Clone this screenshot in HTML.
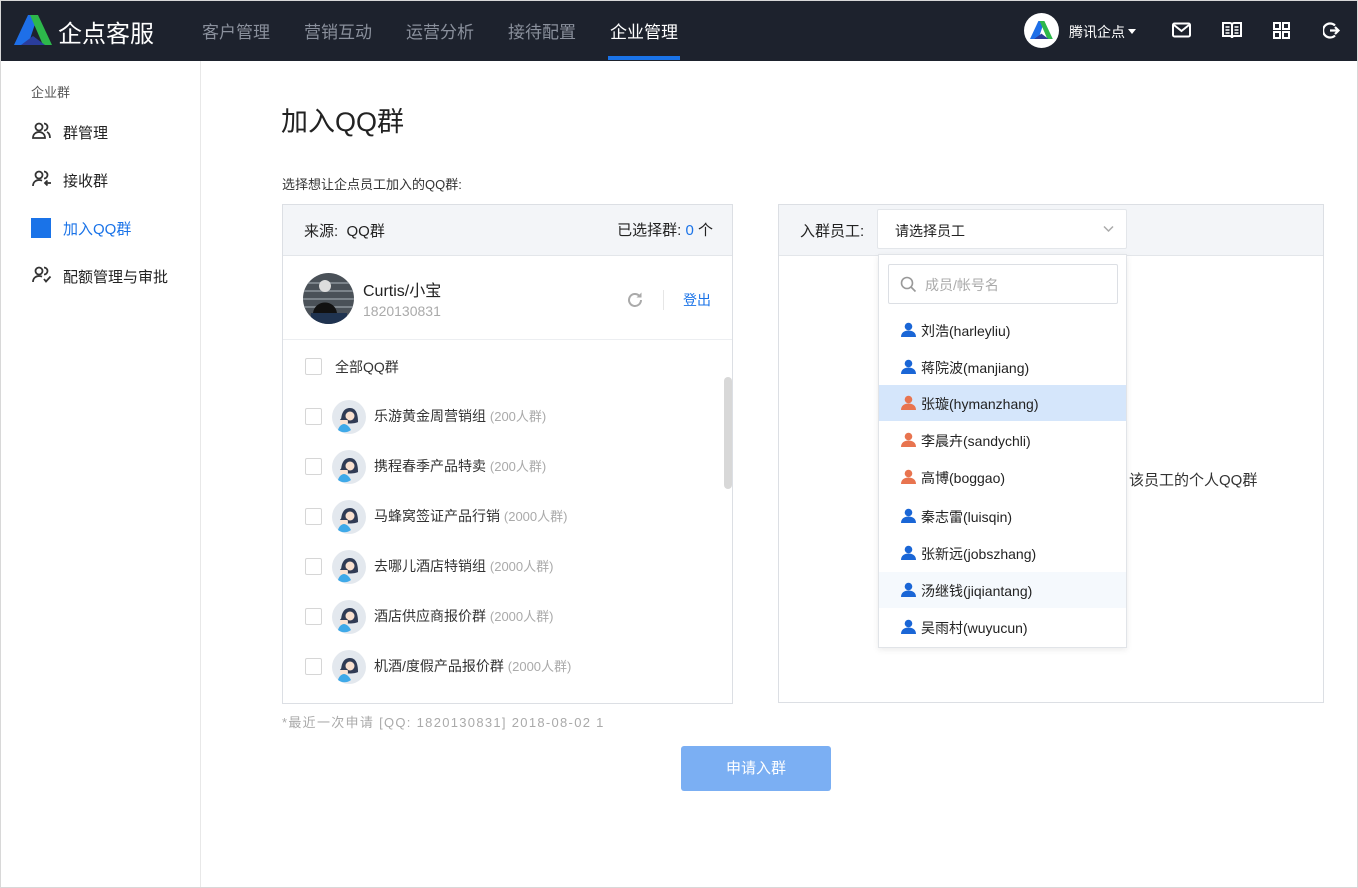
<!DOCTYPE html>
<html><head><meta charset="utf-8"><style>
*{box-sizing:border-box;margin:0;padding:0}
body{width:1358px;height:888px;overflow:hidden;background:#fff;font-family:"Liberation Sans","Noto Sans CJK SC",sans-serif;color:#222;position:relative}
.frame{position:absolute;left:0;top:0;width:1358px;height:888px;border:1px solid #d8d8d8;pointer-events:none}
.nav{position:absolute;left:0;top:0;width:1358px;height:61px;background:#1d222d}
.nav .it{position:absolute;top:18px;font-size:17px;color:#8a909c}
.nav .act{color:#fff}
.abs{position:absolute}
.side{position:absolute;left:0;top:61px;width:201px;height:827px;border-right:1px solid #e8e8e8}
.sitem{position:absolute;left:63px;font-size:15px;color:#222}
.panel{position:absolute;border:1px solid #dcdfe4;background:#fff}
.ph{position:absolute;left:0;top:0;right:0;height:51px;background:#f3f5f8;border-bottom:1px solid #e3e6ea}
.cb{position:absolute;left:22px;width:17px;height:17px;border:1px solid #d6d6d6;border-radius:2px;background:#fff}
.row{position:absolute;left:0;height:50px;width:440px}
.row .av{position:absolute;left:49px;top:8px;width:34px;height:34px}
.row .t{position:absolute;left:91px;top:14px;font-size:14px;color:#333}
.row .t span{color:#aaa;font-size:13px}
.dd{position:absolute;left:878px;top:254px;width:249px;height:394px;background:#fff;border:1px solid #e1e4e8;box-shadow:0 2px 6px rgba(0,0,0,.08)}
.di{position:absolute;left:0;width:247px;height:36px;font-size:14px;color:#222}
.di svg{position:absolute;left:22px;top:10px}
.di span{position:absolute;left:42px;top:9px}
</style></head><body>
<div class="nav">
 <svg class="abs" style="left:14px;top:15px" width="40" height="30" viewBox="0 0 40 30"><path d="M14 0h10l-10 30H0z" fill="#1e6fe8"/><path d="M16 0h8l14 30h-9z" fill="#2db84b"/><path d="M7 30l12-9 12 9z" fill="#2a3d9c"/></svg>
 <div class="abs" style="left:58px;top:14px;font-size:24px;color:#fff">企点客服</div>
 <div class="it" style="left:202px">客户管理</div>
 <div class="it" style="left:304px">营销互动</div>
 <div class="it" style="left:406px">运营分析</div>
 <div class="it" style="left:508px">接待配置</div>
 <div class="it act" style="left:610px">企业管理</div>
 <div class="abs" style="left:608px;top:56px;width:72px;height:4px;background:#1a73e8"></div>
 <div class="abs" style="left:1024px;top:13px;width:35px;height:35px;border-radius:50%;background:#fff"></div>
 <svg class="abs" style="left:1030px;top:20px" width="24" height="20" viewBox="0 0 40 30"><path d="M14 0h10l-10 30H0z" fill="#1e6fe8"/><path d="M16 0h8l14 30h-9z" fill="#2db84b"/><path d="M7 30l12-9 12 9z" fill="#2a3d9c"/></svg>
 <div class="abs" style="left:1069px;top:22px;font-size:14px;color:#fff">腾讯企点</div>
 <div class="abs" style="left:1128px;top:29px;border:4px solid transparent;border-top:5px solid #fff"></div>
 <svg class="abs" style="left:1172px;top:22px" width="19" height="16" viewBox="0 0 19 16"><rect x="1" y="1.5" width="17" height="13" rx="1.5" fill="none" stroke="#fff" stroke-width="2"/><path d="M2 3l7.5 6L17 3" fill="none" stroke="#fff" stroke-width="2"/></svg>
 <svg class="abs" style="left:1222px;top:21px" width="20" height="18" viewBox="0 0 20 18"><path d="M1 2h7a2 2 0 012 2v13a2 2 0 00-2-2H1zM19 2h-7a2 2 0 00-2 2v13a2 2 0 012-2h7z" fill="none" stroke="#fff" stroke-width="2"/><path d="M3.5 6h4M3.5 9h4M3.5 12h4M12.5 6h4M12.5 9h4M12.5 12h4" stroke="#fff" stroke-width="1.5"/></svg>
 <svg class="abs" style="left:1273px;top:22px" width="17" height="17" viewBox="0 0 17 17"><g fill="none" stroke="#fff" stroke-width="2"><rect x="1" y="1" width="6" height="6"/><rect x="10" y="1" width="6" height="6"/><rect x="1" y="10" width="6" height="6"/><rect x="10" y="10" width="6" height="6"/></g></svg>
 <svg class="abs" style="left:1323px;top:22px" width="18" height="17" viewBox="0 0 18 17"><path d="M12 3.5A7 7 0 1 0 12 13.5" fill="none" stroke="#fff" stroke-width="2.2"/><path d="M7 8.5h8M12 5l3.5 3.5L12 12" fill="none" stroke="#fff" stroke-width="2.2"/></svg>
</div>
<div class="side">
 <div class="abs" style="left:31px;top:21px;font-size:13px;color:#555">企业群</div>
 <svg class="abs" style="left:32px;top:61px" width="19" height="17" viewBox="0 0 19 17"><g fill="none" stroke="#333" stroke-width="1.8"><circle cx="7" cy="5" r="3.5"/><path d="M1 16c0-4 3-6 6-6s6 2 6 6z"/><path d="M12 1.5a3.5 3.5 0 010 7M15 10c2 1 3 3 3 6"/></g></svg>
 <div class="sitem" style="top:61px">群管理</div>
 <svg class="abs" style="left:32px;top:109px" width="20" height="17" viewBox="0 0 20 17"><g fill="none" stroke="#333" stroke-width="1.8"><circle cx="7" cy="5" r="3.5"/><path d="M1 16c0-4 3-6 6-6 1 0 2 .2 3 .7"/><path d="M12 1.5a3.5 3.5 0 010 7M19 13h-6M15.5 10.5L13 13l2.5 2.5"/></g></svg>
 <div class="sitem" style="top:109px">接收群</div>
 <div class="abs" style="left:31px;top:157px;width:20px;height:20px;background:#1a73e8"></div>
 <div class="sitem" style="top:157px;color:#1a73e8">加入QQ群</div>
 <svg class="abs" style="left:32px;top:205px" width="20" height="17" viewBox="0 0 20 17"><g fill="none" stroke="#333" stroke-width="1.8"><circle cx="7" cy="5" r="3.5"/><path d="M1 16c0-4 3-6 6-6 1 0 2 .2 3 .7"/><path d="M12 1.5a3.5 3.5 0 010 7M12 13l2 2.5 4.5-5"/></g></svg>
 <div class="sitem" style="top:205px">配额管理与审批</div>
</div>
<div class="abs" style="left:281px;top:100px;font-size:27px;color:#222">加入QQ群</div>
<div class="abs" style="left:282px;top:174px;font-size:13px;color:#333">选择想让企点员工加入的QQ群:</div>

<div class="panel" style="left:282px;top:204px;width:451px;height:500px">
 <div class="ph"><div class="abs" style="left:21px;top:15px;font-size:15px">来源:&nbsp; QQ群</div>
 <div class="abs" style="right:19px;top:14px;font-size:15px">已选择群: <span style="color:#1a73e8">0</span> 个</div></div>
 <div class="abs" style="left:0;top:134px;width:449px;border-top:1px solid #eceef1"></div>
 <svg class="abs" style="left:20px;top:68px" width="51" height="51" viewBox="0 0 51 51"><defs><clipPath id="c"><circle cx="25.5" cy="25.5" r="25.5"/></clipPath></defs><g clip-path="url(#c)"><rect width="51" height="51" fill="#4a5158"/><g stroke="#7b838a" stroke-width="2"><path d="M0 10h51M0 18h51M0 26h51M0 34h51"/></g><circle cx="22" cy="13" r="6" fill="#ddd"/><path d="M10 40c2-14 22-14 24 0z" fill="#111"/><rect x="8" y="40" width="36" height="11" fill="#1f3350"/></g></svg>
 <div class="abs" style="left:80px;top:72px;font-size:16px;color:#222">Curtis/小宝</div>
 <div class="abs" style="left:80px;top:98px;font-size:14px;color:#aaa">1820130831</div>
 <svg class="abs" style="left:343px;top:86px" width="18" height="18" viewBox="0 0 18 18"><path d="M15 9a6 6 0 1 1-1.8-4.3" fill="none" stroke="#aaa" stroke-width="2"/><path d="M15.5 1.5v5h-5z" fill="#aaa"/></svg>
 <div class="abs" style="left:380px;top:85px;width:1px;height:20px;background:#e6e6e6"></div>
 <div class="abs" style="left:400px;top:85px;font-size:14px;color:#1a73e8">登出</div>
 <div class="cb" style="top:153px"></div>
 <div class="abs" style="left:52px;top:152px;font-size:14px;color:#333">全部QQ群</div>
 <div class="abs" style="left:441px;top:172px;width:8px;height:112px;background:#d8d8d8;border-radius:4px"></div>
 <div id="rows"></div>
</div>
<div class="abs" style="left:282px;top:712px;font-size:13px;color:#aaa;width:322px;overflow:hidden;white-space:nowrap;letter-spacing:1.3px">*最近一次申请 [QQ: 1820130831] 2018-08-02 14:30</div>
<div class="abs" style="left:681px;top:746px;width:150px;height:45px;background:#7baff3;border-radius:3px;color:#fff;font-size:15px;text-align:center;line-height:45px">申请入群</div>

<div class="panel" style="left:778px;top:204px;width:546px;height:499px">
 <div class="ph"><div class="abs" style="left:21px;top:15px;font-size:15px">入群员工:</div></div>
 <div class="abs" style="left:350px;top:264px;font-size:15px;color:#333;white-space:nowrap">该员工的个人QQ群</div>
</div>
<div class="abs" style="left:877px;top:209px;width:250px;height:40px;background:#fff;border:1px solid #e3e6ea;border-radius:2px">
 <div class="abs" style="left:17px;top:11px;font-size:14px;color:#222">请选择员工</div>
 <svg class="abs" style="left:225px;top:15px" width="11" height="8" viewBox="0 0 11 8"><path d="M1 1.5l4.5 4.5L10 1.5" fill="none" stroke="#aaa" stroke-width="1.5"/></svg>
</div>
<div class="dd">
 <div class="abs" style="left:9px;top:9px;width:230px;height:40px;border:1px solid #dcdfe4;border-radius:2px">
  <svg class="abs" style="left:11px;top:11px" width="17" height="17" viewBox="0 0 17 17"><circle cx="7" cy="7" r="5.5" fill="none" stroke="#999" stroke-width="1.6"/><path d="M11 11l4.5 4.5" stroke="#999" stroke-width="1.6"/></svg>
  <div class="abs" style="left:36px;top:10px;font-size:14px;color:#aaa">成员/帐号名</div>
 </div>
 <div id="items"></div>
</div>
<div class="frame"></div>
<script>
var g=[["乐游黄金周营销组","200"],["携程春季产品特卖","200"],["马蜂窝签证产品行销","2000"],["去哪儿酒店特销组","2000"],["酒店供应商报价群","2000"],["机酒/度假产品报价群","2000"]];
var av='<svg class="av" viewBox="0 0 34 34"><circle cx="17" cy="17" r="17" fill="#e3e8ee"/><path d="M9 22c0-9 3-14 9-14s8 6 8 14c-3 2-14 2-17 0z" fill="#2f3b55"/><circle cx="18" cy="16" r="4.5" fill="#f9e0cf"/><circle cx="12" cy="22" r="4" fill="#fbe3d2"/><path d="M6 30c1-4 4-6 6-6s5 2 7 6c-4 3-9 3-13 0z" fill="#3fa9e8"/><path d="M8 20c1-3 6-3 8 0z" fill="#2f3b55"/></svg>';
var h='';g.forEach(function(x,i){var y=187+i*50;h+='<div class="row" style="top:'+y+'px"><div class="cb" style="top:16px"></div>'+av+'<div class="t">'+x[0]+' <span>('+x[1]+'人群)</span></div></div>';});
document.getElementById('rows').innerHTML=h;
var p=[["刘浩(harleyliu)","b"],["蒋院波(manjiang)","b"],["张璇(hymanzhang)","o"],["李晨卉(sandychli)","o"],["高博(boggao)","o"],["秦志雷(luisqin)","b"],["张新远(jobszhang)","b"],["汤继钱(jiqiantang)","b"],["吴雨村(wuyucun)","b"]];
var ys=[57,94,130,167,204,243,280,317,354];
var s='';p.forEach(function(x,i){var c=x[1]=='b'?'#1a66d6':'#e8744f';var bg=i==2?'background:#d5e6fb;':(i==7?'background:#f5f9fd;':'');
s+='<div class="di" style="top:'+ys[i]+'px;'+bg+'"><svg width="15" height="15" viewBox="0 0 15 15"><circle cx="7.5" cy="4.5" r="3.8" fill="'+c+'"/><path d="M0 15c0-4 3-6.5 7.5-6.5S15 11 15 15z" fill="'+c+'"/></svg><span>'+x[0]+'</span></div>';});
document.getElementById('items').innerHTML=s;
</script>
</body></html>
